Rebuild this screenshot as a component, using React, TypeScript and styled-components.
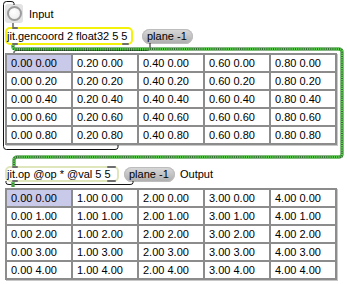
import React, { FC } from "react";
import styled, { createGlobalStyle } from "styled-components";

const GlobalStyle = createGlobalStyle`
  html, body {
    margin: 0;
    padding: 0;
    background: #ffffff;
  }
  body {
    font-family: "Liberation Sans", Arial, sans-serif;
    font-size: 11px;
    color: #000;
  }
`;

const Patcher = styled.div`
  position: relative;
  width: 347px;
  height: 284px;
  overflow: hidden;
  padding: 4px 0 0 5px;
  box-sizing: border-box;
  display: flex;
  flex-direction: column;
`;

const Row = styled.div<{ $top: number; $gap: number }>`
  display: flex;
  align-items: center;
  gap: ${p => p.$gap}px;
  margin-top: ${p => p.$top}px;
`;

const ButtonBox = styled.div`
  position: relative;
  width: 18px;
  height: 19px;
  background: #e3e3e3;
  border-radius: 3px;
  display: flex;
  align-items: center;
  justify-content: center;
`;

const Ring = styled.div`
  width: 11px;
  height: 11px;
  border-radius: 50%;
  border: 2px solid #9c9c9c;
  background: radial-gradient(circle at 40% 35%, #ffffff 0%, #f2f2f2 60%, #dcdcdc 100%);
`;

const Label = styled.span<{ $drop?: number }>`
  line-height: 13px;
  white-space: nowrap;
  padding-top: ${p => p.$drop ?? 0}px;
`;

const ObjectBox = styled.div<{ $width: number; $border: string; $h: number }>`
  position: relative;
  flex-shrink: 0;
  width: ${p => p.$width}px;
  height: ${p => p.$h}px;
  box-sizing: border-box;
  border: 2px solid ${p => p.$border};
  border-radius: 5px;
  background: #fff;
  display: flex;
  align-items: center;
  padding-left: 0;
  white-space: nowrap;
`;

const Port = styled.span<{ $edge: "top" | "bottom"; $left: number; $w: number }>`
  position: absolute;
  ${p => p.$edge}: -2px;
  left: ${p => p.$left}px;
  width: ${p => p.$w}px;
  height: 2px;
  background: #6e6e6e;
  border-radius: 1px;
`;

const Message = styled.div<{ $width: number }>`
  flex-shrink: 0;
  width: ${p => p.$width}px;
  height: 15px;
  border-radius: 8px;
  background: linear-gradient(#dadada, #acacac);
  box-shadow: inset 0 0 0 1px #bdbdbd;
  display: flex;
  align-items: center;
  padding-left: 5px;
  box-sizing: border-box;
  white-space: nowrap;
`;

const Table = styled.div<{ $top: number }>`
  margin-top: ${p => p.$top}px;
  display: grid;
  grid-template-columns: repeat(5, 64px);
  grid-auto-rows: 16px;
  gap: 2px;
  width: max-content;
  border: 2px solid #8c8c8c;
  background: #8c8c8c;
  box-shadow: 1px 1px 0 #c8c8c8;
`;

const Cell = styled.div<{ $selected?: boolean }>`
  background: ${p => (p.$selected ? "#c9c9ea" : "#ffffff")};
  padding-left: 4px;
  display: flex;
  align-items: center;
  white-space: nowrap;
  line-height: 12px;
`;

const Cords = styled.svg`
  position: absolute;
  left: 0;
  top: 0;
  pointer-events: none;
`;

type Pt = [number, number];

const rounded = (pts: Pt[], r = 3) => {
  let d = `M${pts[0][0]} ${pts[0][1]}`;
  for (let i = 1; i < pts.length - 1; i++) {
    const [px, py] = pts[i - 1];
    const [cx, cy] = pts[i];
    const [nx, ny] = pts[i + 1];
    const l1 = Math.hypot(cx - px, cy - py);
    const l2 = Math.hypot(nx - cx, ny - cy);
    const a = Math.min(r, l1 / 2);
    const b = Math.min(r, l2 / 2);
    const sx = cx - ((cx - px) / l1) * a;
    const sy = cy - ((cy - py) / l1) * a;
    const ex = cx + ((nx - cx) / l2) * b;
    const ey = cy + ((ny - cy) / l2) * b;
    d += ` L${sx} ${sy} Q${cx} ${cy} ${ex} ${ey}`;
  }
  const last = pts[pts.length - 1];
  return d + ` L${last[0]} ${last[1]}`;
};

const MatrixCord: FC<{ pts: Pt[] }> = ({ pts }) => {
  const d = rounded(pts);
  return (
    <>
      <path d={d} fill="none" stroke="#2f6b2f" strokeWidth={3} />
      <path d={d} fill="none" stroke="#5ccf4e" strokeWidth={3} strokeDasharray="1.2 1" />
    </>
  );
};

const fmt = (n: number) => n.toFixed(2);

const Grid: FC<{ top: number; scale: number }> = ({ top, scale }) => {
  const cells = [];
  for (let row = 0; row < 5; row++) {
    for (let col = 0; col < 5; col++) {
      cells.push(
        <Cell key={`${row}-${col}`} $selected={row === 0 && col === 0}>
          {fmt(col * scale)} {fmt(row * scale)}
        </Cell>
      );
    }
  }
  return <Table $top={top}>{cells}</Table>;
};

export default function App() {
  return (
    <>
      <GlobalStyle />
      <Patcher>
        <Row $top={0} $gap={6}>
          <ButtonBox>
            <Ring />
          </ButtonBox>
          <Label $drop={1}>Input</Label>
        </Row>

        <Row $top={4} $gap={9}>
          <ObjectBox $width={128} $h={18} $border="#f4f20a">
            jit.gencoord 2 float32 5 5
            <Port $edge="top" $left={5} $w={6} />
            <Port $edge="bottom" $left={5} $w={6} />
            <Port $edge="bottom" $left={115} $w={7} />
          </ObjectBox>
          <Message $width={51}>plane -1</Message>
        </Row>

        <Grid top={8} scale={0.2} />

        <Row $top={21} $gap={5}>
          <ObjectBox $width={114} $h={16} $border="#dfe6bc">
            jit.op @op * @val 5 5
            <Port $edge="top" $left={5} $w={6} />
            <Port $edge="top" $left={100} $w={9} />
            <Port $edge="bottom" $left={5} $w={6} />
            <Port $edge="bottom" $left={100} $w={9} />
          </ObjectBox>
          <Message $width={51}>plane -1</Message>
          <Label>Output</Label>
        </Row>

        <Grid top={6} scale={1} />

        <Cords width={347} height={284} viewBox="0 0 347 284">
          <path d={rounded([[14, 5], [14, 1.5], [3.5, 1.5], [3.5, 149.5], [118, 149.5], [118, 145]])} fill="none" stroke="#111" strokeWidth={1} />
          <path d="M13 23 V27" stroke="#8a8a8a" strokeWidth={2} />
          <path d={rounded([[150, 43], [150, 50.5], [14, 50.5], [14, 53]])} fill="none" stroke="#111" strokeWidth={1} />
          <MatrixCord pts={[[13, 45], [13, 49], [342, 49], [342, 157], [14, 157], [14, 166]]} />
          <path d={rounded([[133, 181], [133, 184.5], [6, 184.5], [6, 181]])} fill="none" stroke="#111" strokeWidth={1} />
          <MatrixCord pts={[[13, 182], [13, 187]]} />
        </Cords>
      </Patcher>
    </>
  );
}
